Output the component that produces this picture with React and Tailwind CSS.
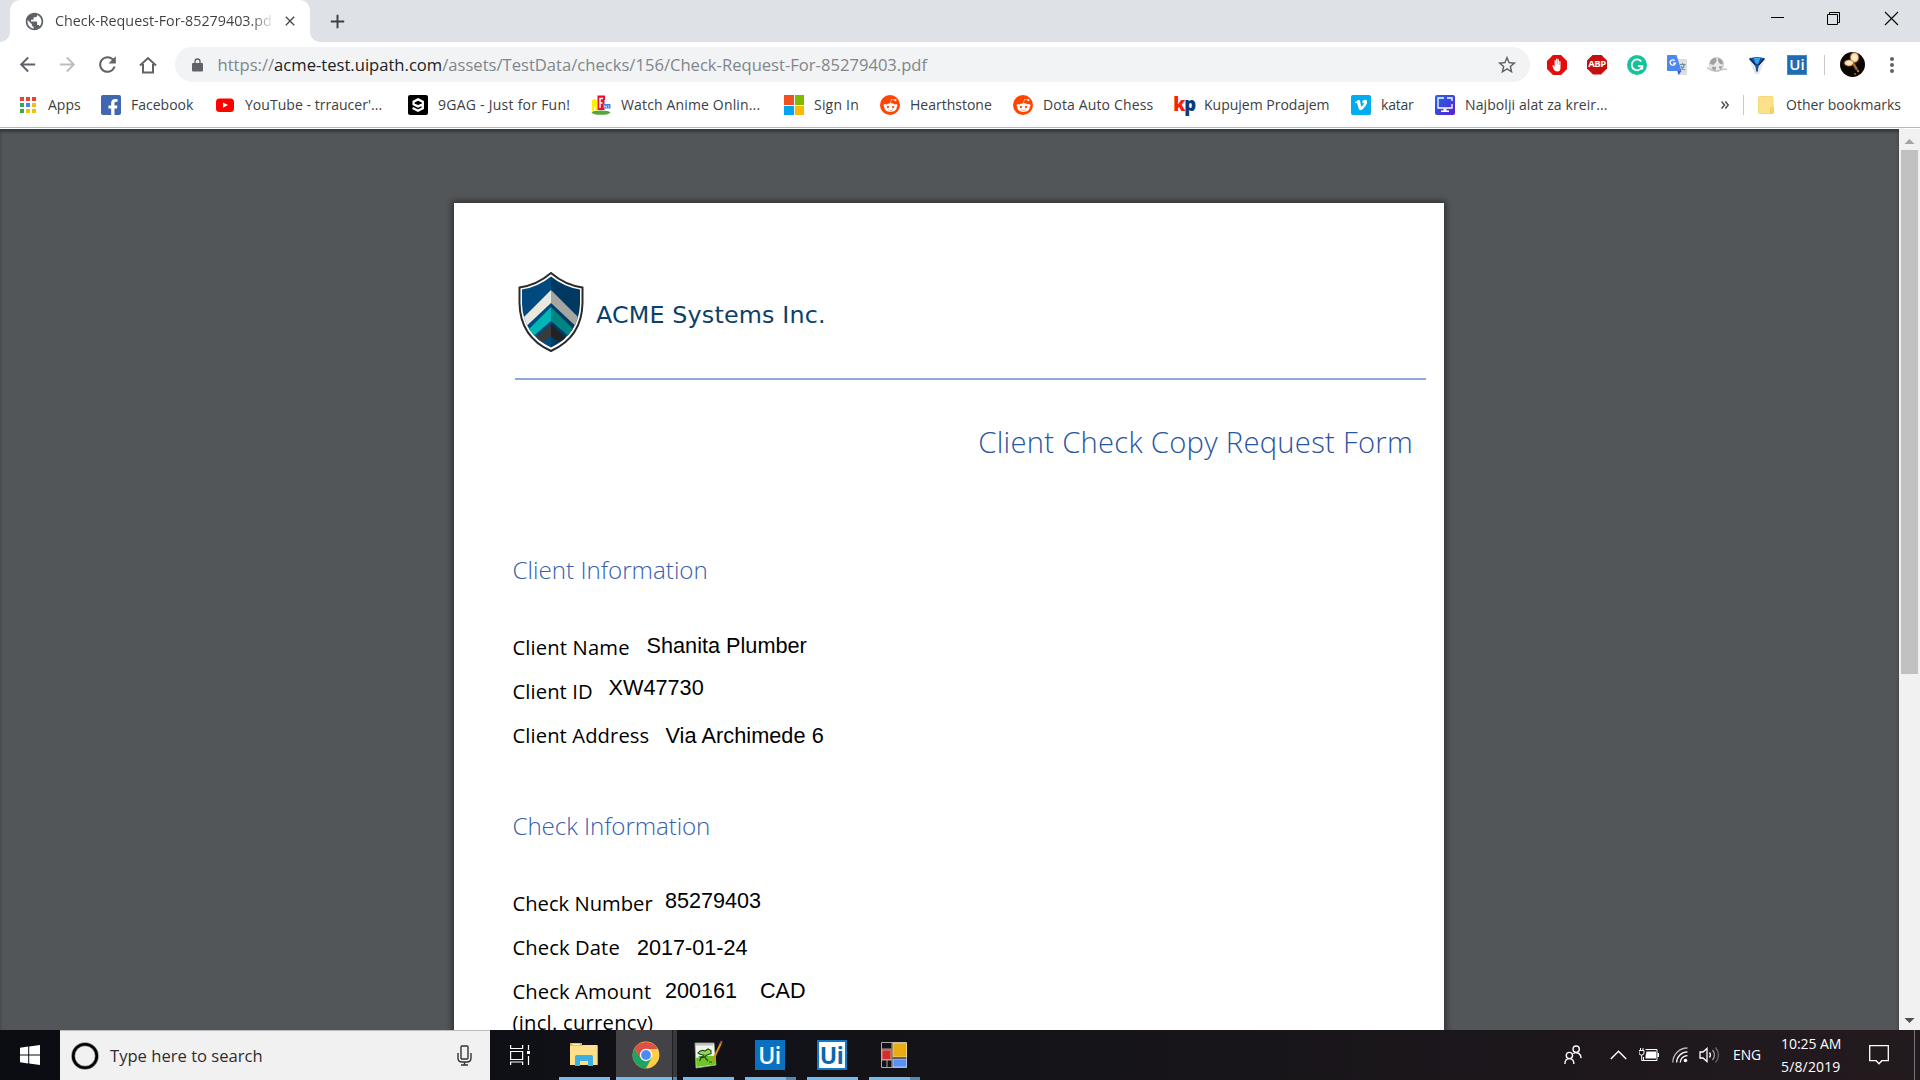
import React from "react";
import { MdArrowBack, MdArrowForward, MdRefresh, MdStarBorder, MdPublic, MdClose, MdAdd } from "react-icons/md";
import { FaFacebookF, FaRedditAlien, FaVimeoV } from "react-icons/fa";

/* ---------- bookmark icons ---------- */

function AppsIcon() {
  const colors = ["#ea4335", "#ea4335", "#ea4335", "#34a853", "#4285f4", "#fbbc05", "#34a853", "#fbbc05", "#fbbc05"];
  return (
    <svg className="h-4 w-4" viewBox="0 0 16 16">
      {colors.map((c, i) => (
        <rect key={i} x={(i % 3) * 6} y={Math.floor(i / 3) * 6} width="4" height="4" fill={c} />
      ))}
    </svg>
  );
}

function FacebookIcon() {
  return (
    <div className="flex h-5 w-5 items-end justify-end overflow-hidden rounded-[2px] bg-[#4267b2] pr-[2px]">
      <FaFacebookF className="-mb-px h-[17px] w-[12px] text-white" />
    </div>
  );
}

function YouTubeIcon() {
  return (
    <svg className="h-5 w-[18px]" viewBox="0 0 18 20">
      <rect x="0" y="3.5" width="18" height="13.5" rx="3.5" fill="#f00" />
      <path d="M7 7.4v5.4l5-2.7z" fill="#fff" />
    </svg>
  );
}

function NineGagIcon() {
  return (
    <svg className="h-5 w-5" viewBox="0 0 20 20">
      <rect width="20" height="20" rx="2" fill="#000" />
      <path d="M14.800 9.200 10 11.400 5.600 9.300V6.600L10 4.400l4.800 2.300v6.500L10 15.700l-5.400-2.700" fill="none" stroke="#fff" strokeWidth="2.300" />
    </svg>
  );
}

function AnimeIcon() {
  return (
    <svg className="h-5 w-5" viewBox="0 0 20 20">
      <ellipse cx="10" cy="17.600" rx="9.400" ry="2.200" fill="#57a639" />
      <path d="M1 16V6.500Q1 4 3.500 4T6 6.500V16H4.400v-4H3v4z" fill="#fff000" />
      <path d="M6.500.500H14V5h-.500v10h-7z" fill="#e8112d" />
      <path d="M9 13V3.500h3M9 8h2.500" stroke="#fff" strokeWidth="1.500" fill="none" />
      <path d="M12 9h7.500v4.500H12z" fill="#3f86dc" />
      <path d="M13.500 12.500v-2l2 2v-2m2 0v2" stroke="#d8ebff" fill="none" strokeWidth=".8" />
    </svg>
  );
}

function MicrosoftIcon() {
  return (
    <div className="grid h-5 w-5 grid-cols-2 gap-px">
      <div className="bg-[#f25022]" />
      <div className="bg-[#7fba00]" />
      <div className="bg-[#00a4ef]" />
      <div className="bg-[#ffb900]" />
    </div>
  );
}

function RedditIcon() {
  return (
    <div className="flex h-5 w-5 items-center justify-center rounded-full bg-[#ff4500]">
      <FaRedditAlien className="h-[15px] w-[15px] text-white" />
    </div>
  );
}

function KpIcon() {
  return (
    <div className="-mt-[3px] flex h-5 w-5 items-center justify-center font-['Open_Sans'] text-[18.5px] leading-5 font-extrabold tracking-[-1.4px]">
      <span className="text-[#f5220d]">k</span>
      <span className="text-[#0b3a75]">p</span>
    </div>
  );
}

function VimeoIcon() {
  return (
    <div className="flex h-5 w-5 items-center justify-center rounded-[2px] bg-[#00adef]">
      <FaVimeoV className="h-[14px] w-[14px] text-white" />
    </div>
  );
}

function MonitorIcon() {
  return (
    <svg className="h-5 w-5" viewBox="0 0 20 20">
      <defs>
        <linearGradient id="mon" x1="0" y1="0" x2="1" y2="1">
          <stop offset="0" stopColor="#1d6be6" />
          <stop offset="1" stopColor="#5a1fd8" />
        </linearGradient>
      </defs>
      <rect width="20" height="20" rx="2" fill="url(#mon)" />
      <path d="M9 3H3v10h14V9M12 3h5v3" fill="none" stroke="#fff" strokeWidth="1.300" />
      <path d="M8.500 13.500h3v2H14V17H6v-1.500h2.500z" fill="#fff" />
    </svg>
  );
}

const bookmarks = [
  { label: "Apps", icon: AppsIcon, item: "w-[81px]", text: "pl-3" },
  { label: "Facebook", icon: FacebookIcon, item: "w-[115px]", text: "pl-[10px]" },
  { label: "YouTube - trraucer'...", icon: YouTubeIcon, item: "w-[192px]", text: "pl-[11px] tracking-[0.03px]" },
  { label: "9GAG - Just for Fun!", icon: NineGagIcon, item: "w-[183px]", text: "pl-[10px] tracking-[0.25px]" },
  { label: "Watch Anime Onlin...", icon: AnimeIcon, item: "w-[193px]", text: "pl-[10px] tracking-[0.15px]" },
  { label: "Sign In", icon: MicrosoftIcon, item: "w-[96px]", text: "pl-[10px] tracking-[0.2px]" },
  { label: "Hearthstone", icon: RedditIcon, item: "w-[133px]", text: "pl-[10px]" },
  { label: "Dota Auto Chess", icon: RedditIcon, item: "w-[161px]", text: "pl-[10px] tracking-[0.15px]" },
  { label: "Kupujem Prodajem", icon: KpIcon, item: "w-[177px]", text: "pl-[10px]" },
  { label: "katar", icon: VimeoIcon, item: "w-[84px]", text: "pl-[10px] tracking-[-0.2px]" },
  { label: "Najbolji alat za kreir...", icon: MonitorIcon, item: "w-[286px]", text: "pl-[10px] tracking-[0.1px]" },
];

/* ---------- browser chrome ---------- */

function TabStrip() {
  return (
    <div className="flex h-[42px] bg-[#dee1e6]">
      <div className="w-[10px] bg-white">
        <div className="h-full rounded-br-[10px] bg-[#dee1e6]" />
      </div>
      <div className="w-[300px] bg-[#dee1e6]">
        <div className="flex h-full items-center rounded-t-[10px] bg-white pl-[14px]">
          <MdPublic className="h-[21px] w-[21px] text-[#5f6368]" />
          <div className="ml-[10px] w-[218px] overflow-hidden bg-linear-to-r from-[#3c4043] from-90% to-[#3c404310] bg-clip-text text-[14.300px] leading-5 whitespace-nowrap text-transparent">
            Check-Request-For-85279403.pd
          </div>
          <MdClose className="ml-[9px] h-4 w-4 text-[#45494d]" />
        </div>
      </div>
      <div className="w-[10px] bg-white">
        <div className="h-full rounded-bl-[10px] bg-[#dee1e6]" />
      </div>
      <div className="flex flex-1 items-center pl-[6px]">
        <MdAdd className="h-[23px] w-[23px] text-[#3c4043]" />
      </div>
      <svg className="h-[42px] w-[149px]" viewBox="0 0 149 42" fill="none" stroke="#000" strokeWidth="1">
        <path d="M0 17.500h13" />
        <path d="M56.500 14.500h10v10h-10zM58.500 14.500v-2h10v10h-2" />
        <path d="M114 12l13 13M127 12l-13 13" strokeWidth="1.100" />
      </svg>
    </div>
  );
}

function Extensions() {
  return (
    <div className="flex items-center gap-5 pl-[17px]">
      <svg className="h-5 w-5" viewBox="0 0 20 20">
        <path d="M6 0h8l6 6v8l-6 6H6l-6-6V6z" fill="#e40d0d" />
        <path d="M5.300 10.500 6.300 10l1.300 2V5.500q.6-.8 1.200 0V9.500h.3V3.800q.65-.8 1.300 0v5.700h.3V4.500q.6-.8 1.200 0v5.500h.4V6.300q.6-.7 1.200 0V13q0 3.600-3.200 3.600-2.600 0-3.500-2.100z" fill="#fff" />
      </svg>
      <div className="flex h-5 w-5 items-center justify-center bg-[#c70d0d] text-[9.500px] font-bold tracking-[-0.4px] text-white [clip-path:polygon(30%_0,70%_0,100%_30%,100%_70%,70%_100%,30%_100%,0_70%,0_30%)]">
        ABP
      </div>
      <svg className="h-5 w-5" viewBox="0 0 20 20">
        <circle cx="10" cy="10" r="10" fill="#15c39a" />
        <path d="M14.300 6.500A5.400 5.400 0 1 0 15.300 11.200H11M15.300 10.500v4" fill="none" stroke="#fff" strokeWidth="1.800" />
      </svg>
      <svg className="h-5 w-5" viewBox="0 0 20 20">
        <path d="M8 4h11q1 0 1 1v14q0 1-1 1h-8z" fill="#dcdee0" />
        <path d="M13 9.500h5.500M15.500 8v1.500M17.500 9.500q-1 4-4 5.500M14 11q1 3 4 4" stroke="#6d8a98" strokeWidth="1.100" fill="none" />
        <path d="M1 0h8.500l5 16H1q-1 0-1-1V1q0-1 1-1z" fill="#4d87f0" />
        <path d="M10.500 16h4L11.500 20z" fill="#3a5cc0" />
        <path d="M7.800 5.600A2.700 2.700 0 1 0 8.500 8.100H6" fill="none" stroke="#fff" strokeWidth="1.300" />
      </svg>
      <svg className="h-5 w-5" viewBox="0 0 20 20">
        <circle cx="9.500" cy="9.500" r="7" fill="#e9e9e9" stroke="#cdcdcd" />
        <path d="M3.500 5.500 7 2.800l3 1.200-1 3-2.500 3L3 9zM11.500 2.800l4 2.700.5 4-3-.5-2-3zM5 11.500l4 .5-.5 4-3-1.500zM11.500 11.500l4-.5-2 4z" fill="#a0a0a0" />
        <path d="M0 12.500q6 5 12 3t8-1" fill="none" stroke="#bdbdbd" strokeWidth="1.200" />
      </svg>
      <svg className="h-5 w-5" viewBox="0 0 20 20">
        <path d="M3 2h14q2 2 0 5l-5 12H8L3 7Q1 4 3 2z" fill="#e3e5e8" />
        <path d="M2.500 3.500q7.500-3 15 0L14 8q-3 2-3 8.500H9Q9 10 6 8z" fill="#14509e" />
        <path d="M6.500 2.800h7L11.500 8q-1.500 2-3 0z" fill="#38a4ee" />
        <path d="M2.500 3.500 8.500 10M17.500 3.500l-6 6.500" stroke="#0a2550" strokeWidth="1.200" />
      </svg>
      <div className="flex h-5 w-5 items-center justify-center border border-[#4b88bd] bg-[#1f6cb0] text-[15px] font-semibold text-white">
        Ui
      </div>
    </div>
  );
}

function Toolbar() {
  return (
    <div className="flex h-[45px] items-center bg-white pl-4">
      <MdArrowBack className="h-[23px] w-[23px] text-[#5f6368]" />
      <MdArrowForward className="ml-[17px] h-[23px] w-[23px] text-[#bbbdbf]" />
      <MdRefresh className="ml-4 h-[25px] w-[25px] text-[#5f6368]" />
      <svg className="ml-[19px] h-[18px] w-[18px]" viewBox="0 0 18 18" fill="none" stroke="#5f6368" strokeWidth="2">
        <path d="M1 9.500 9 2l8 7.500M4 8v8.500h10V8" />
      </svg>
      <div className="ml-[18px] flex h-[35px] w-[1355px] items-center rounded-full bg-[#f1f3f4] pr-3 pl-[17px]">
        <svg className="h-[14px] w-[11px]" viewBox="0 0 11 14">
          <path d="M3 5.500V3.500a2.500 2.500 0 0 1 5 0v2" fill="none" stroke="#5f6368" strokeWidth="1.300" />
          <rect y="5" width="11" height="8.500" rx="1" fill="#5f6368" />
        </svg>
        <div className="ml-[14.500px] flex-1 text-[16.600px] leading-6 whitespace-nowrap text-[#80868b]">
          https://<span className="text-[#202124]">acme-test.uipath.com</span>/assets/TestData/checks/156/Check-Request-For-85279403.pdf
        </div>
        <MdStarBorder className="h-[22px] w-[22px] text-[#5f6368]" />
      </div>
      <Extensions />
      <div className="ml-[17px] h-5 w-px bg-[#c6c8ca]" />
      <svg className="ml-[15px] h-[25px] w-[25px]" viewBox="0 0 25 25">
        <defs>
          <clipPath id="av"><circle cx="12.500" cy="12.500" r="12.500" /></clipPath>
          <radialGradient id="flame"><stop offset="0" stopColor="#fff6e0" /><stop offset=".6" stopColor="#ffd9a0" /><stop offset="1" stopColor="#8a4a18" stopOpacity="0" /></radialGradient>
        </defs>
        <g clipPath="url(#av)">
          <rect width="25" height="25" fill="#0c0604" />
          <ellipse cx="14.500" cy="5.500" rx="5.500" ry="6.500" fill="url(#flame)" />
          <ellipse cx="9" cy="11" rx="6" ry="4" fill="url(#flame)" />
          <path d="M12 12l2.500-1L18 17l-2 1.500z" fill="#a86a30" />
          <circle cx="18" cy="19" r="1.200" fill="#a3863c" />
          <circle cx="15" cy="22" r=".9" fill="#8c7a30" />
        </g>
      </svg>
      <svg className="ml-[25px] h-[18px] w-1" viewBox="0 0 4 18" fill="#5f6368">
        <circle cx="2" cy="3" r="2" />
        <circle cx="2" cy="9" r="2" />
        <circle cx="2" cy="15" r="2" />
      </svg>
    </div>
  );
}

function BookmarksBar() {
  return (
    <div className="flex h-[42px] items-center border-b border-white bg-white">
      <div className="flex h-full w-full items-center border-b border-[#b6b7b8] pb-[4px] pl-5 text-[14px] leading-5 whitespace-nowrap text-[#3c4043]">
        {bookmarks.map(({ label, icon: Icon, item, text }) => (
          <div key={label} className={"flex shrink-0 items-center " + item}>
            <Icon />
            <span className={text}>{label}</span>
          </div>
        ))}
        <svg className="h-2 w-2" viewBox="0 0 8 8" fill="none" stroke="#4a4d51" strokeWidth="1.500">
          <path d="M.5.500 3.500 4l-3 3.500M4.300.500l3 3.500-3 3.500" />
        </svg>
        <div className="ml-[14px] h-5 w-px bg-[#c6c8ca]" />
        <svg className="ml-[14px] h-[18px] w-4" viewBox="0 0 16 18">
          <rect x=".5" y=".5" width="14.500" height="17" rx="1" fill="#fce18a" stroke="#f7d774" />
          <rect x="12.500" y="11.500" width="3" height="6" rx="1" fill="#fbd75b" stroke="#eec444" strokeWidth=".8" />
        </svg>
        <span className="pl-3">Other bookmarks</span>
      </div>
    </div>
  );
}

/* ---------- PDF document ---------- */

function AcmeShield() {
  return (
    <svg className="h-20 w-[66px]" viewBox="0 0 66 80">
      <defs>
        <clipPath id="inner">
          <path d="M33 4.500Q20 15 4 17.500V32Q5 62 33 75.500 61 62 62 32V17.500Q46 15 33 4.500z" />
        </clipPath>
      </defs>
      <path d="M33 1Q19 13 1.500 15.500V31Q2 65 33 79 64 65 64.500 31V15.500Q47 13 33 1z" fill="#fff" stroke="#2b2a2a" strokeWidth="2" />
      <g clipPath="url(#inner)">
        <rect width="33" height="80" fill="#004a80" />
        <rect x="33" width="33" height="80" fill="#003a63" />
        <path d="M33 18 0 51v11l33-31z" fill="#e8e8df" />
        <path d="M33 18l33 33v11L33 31z" fill="#a5a6a2" />
        <path d="M33 35 6 62v10l27-23z" fill="#00b5b5" />
        <path d="M33 35l27 27v10L33 49z" fill="#008585" />
        <path d="M33 52 14 70v8l19-14z" fill="#3a3a3a" />
        <path d="M33 52l19 18v8L33 64z" fill="#222" />
      </g>
    </svg>
  );
}

function Value({ className, children }) {
  return <div className={"font-['Liberation_Sans'] " + className}>{children}</div>;
}

function Field({ label, width, children }) {
  return (
    <div className="flex h-11 whitespace-nowrap">
      <div className={width}>{label}</div>
      {children}
    </div>
  );
}

function Section({ title, titleClass, children }) {
  return (
    <section className="pl-[58.500px]">
      <h2 className={"h-[81px] text-[24.200px] leading-9 font-light text-[#3560b0] " + titleClass}>{title}</h2>
      <div className="text-[20.200px] leading-[30px] text-black">{children}</div>
    </section>
  );
}

function PdfViewer() {
  return (
    <div className="flex h-[901px] bg-[#525659]">
      <div className="h-full flex-1 overflow-hidden pt-[74px] pl-[454px] shadow-[inset_0_3px_3px_rgba(0,0,0,0.35)]">
        <div className="h-[1400px] w-[990px] bg-white shadow-[0_0_6px_2px_rgba(0,0,0,0.45)]">
          <div className="flex h-[175px] pt-[69px] pl-16">
            <AcmeShield />
            <div className="mt-7 ml-[12px] font-['DejaVu_Sans'] text-[23.800px] leading-[30px] tracking-[0.150px] whitespace-nowrap text-[#0d3f6b]">
              ACME Systems Inc.
            </div>
          </div>
          <div className="ml-[61px] h-[2px] w-[911px] bg-[#8faadc]" />
          <h1 className="mt-[42px] pr-[31px] text-right text-[29.200px] leading-10 font-light tracking-[0.280px] text-[#2a559f]">
            Client Check Copy Request Form
          </h1>
          <div className="mt-[90px] flex flex-col gap-[43px]">
            <Section title="Client Information" titleClass="">
              <Field label="Client Name" width="-mt-px w-[134px] tracking-[0.15px]">
                <Value className="-mt-[2px] text-[21.700px]">Shanita Plumber</Value>
              </Field>
              <Field label="Client ID" width="-mt-px w-[96px] tracking-[0.1px]">
                <Value className="-mt-1 text-[21.700px]">XW47730</Value>
              </Field>
              <Field label="Client Address" width="-mt-px w-[153px] tracking-[0.1px]">
                <Value className="text-[21.700px] tracking-[0.05px]">Via Archimede 6</Value>
              </Field>
            </Section>
            <Section title="Check Information" titleClass="tracking-[-0.1px]">
              <Field label="Check Number" width="-mt-px w-[152.500px]">
                <Value className="-mt-[3px] text-[21.600px]">85279403</Value>
              </Field>
              <Field label="Check Date" width="-mt-px w-[124.500px] tracking-[0.1px]">
                <Value className="text-[21.600px]">2017-01-24</Value>
              </Field>
              <Field
                label={<>Check Amount<br /><span className="tracking-[0.25px]">(incl. currency)</span></>}
                width="w-[152.500px] tracking-[0.1px] leading-[31px] -mt-px"
              >
                <Value className="w-[95px] -mt-px text-[21.600px]">200161</Value>
                <Value className="-mt-px text-[21.600px]">CAD</Value>
              </Field>
            </Section>
          </div>
        </div>
      </div>
      <div className="flex w-[21px] flex-col items-center bg-[#f1f1f1]">
        <svg className="h-[21px] w-[21px]" viewBox="0 0 21 21">
          <path d="M10.500 10l5 5h-10z" fill="#a3a3a3" />
        </svg>
        <div className="h-[524px] w-[17px] bg-[#c1c1c1]" />
        <svg className="mt-auto h-[21px] w-[21px]" viewBox="0 0 21 21">
          <path d="M5.500 9h10l-5 5z" fill="#505050" />
        </svg>
      </div>
    </div>
  );
}

/* ---------- taskbar ---------- */

function ExplorerIcon() {
  return (
    <svg className="h-[30px] w-[30px]" viewBox="0 0 30 30">
      <path d="M1 3h12v3h15.500v19H1z" fill="#e8b838" />
      <path d="M1 6h11l1.500-1h15v20H1z" fill="#ffe08a" />
      <path d="M3.500 4.500h7" stroke="#fff3c8" strokeWidth="1.500" />
      <path d="M6 26V17q0-2 2-2h14q2 0 2 2v9h-5v-5h-8v5z" fill="#3bb0e4" />
    </svg>
  );
}

function ChromeIcon() {
  return (
    <svg className="h-7 w-7" viewBox="0 0 48 48">
      <circle cx="24" cy="24" r="23" fill="#ffcd46" />
      <path d="M4.100 12.500A23 23 0 0 0 23.500 47L33.500 29.500 24 24 14.500 29.500z" fill="#1da462" />
      <path d="M4.100 12.500 14.500 30 24 24V13.500h19.900A23 23 0 0 0 4.100 12.500z" fill="#dd5144" />
      <circle cx="24" cy="24" r="10.600" fill="#fff" />
      <circle cx="24" cy="24" r="8.400" fill="#4c8bf5" />
    </svg>
  );
}

function NotepadIcon() {
  return (
    <svg className="h-[30px] w-[30px]" viewBox="0 0 30 30">
      <path d="M2 3h19l2 22-20 3z" fill="#f2f4ee" stroke="#9aa38c" strokeWidth=".8" />
      <path d="M3 18q10-3 19.300-2l.7 8.500L3.500 27z" fill="#6fc524" />
      <path d="M2.500 4.500h18" stroke="#8b9186" strokeWidth="2" strokeDasharray="1 1" />
      <path d="M5 13q3-4 7-2l3-2 3 1.500v3L14 15q-4 4-7 2 3 0 4-2-4 0-6-2z" fill="#9ad65a" stroke="#1d4f14" strokeWidth="1.100" />
      <path d="M8 18l-1.500 3M12 17.500l3 3.500M16 22h3" stroke="#1d4f14" strokeWidth="1.200" fill="none" />
      <path d="M28 3 20 20l-.5 2" stroke="#d98e1c" strokeWidth="2" fill="none" />
      <path d="M28.800 1 27.500 4" stroke="#a5564e" strokeWidth="2" />
    </svg>
  );
}

function UiPathIcon() {
  return (
    <div className="flex h-[30px] w-[30px] items-center justify-center bg-[#0a70c0] text-[23px] leading-none font-semibold tracking-[-0.5px] text-white">
      Ui
    </div>
  );
}

function UiPathRobotIcon() {
  return (
    <div className="flex h-[30px] w-[30px] items-center justify-center border-2 border-[#1478c6] bg-white text-[23px] leading-none font-bold tracking-[-0.5px] text-[#0a67ad]">
      Ui
    </div>
  );
}

function FormsIcon() {
  return (
    <svg className="h-[26px] w-[26px]" viewBox="0 0 26 26">
      <path d="M.5.500h25v25H.5zM.5 7h10M.5 18h11M6 18v7.500M11 .5v25" fill="none" stroke="#a9a9a9" />
      <rect x="12" y="1" width="13.500" height="14" fill="#e9ac12" stroke="#f7dc86" strokeWidth=".8" />
      <rect x="1" y="8" width="9" height="9.500" fill="#d0312d" stroke="#eda29e" strokeWidth=".8" />
      <rect x="12" y="17" width="13.500" height="8" fill="#5b8ff0" stroke="#b7ceff" strokeWidth=".8" />
    </svg>
  );
}

function TaskButton({ icon: Icon, stacked }) {
  return (
    <div className="flex h-full w-[62px] items-stretch">
      <div className={"ml-[6px] flex flex-col " + (stacked ? "w-[41px]" : "w-[51px]")}>
        <div className="flex flex-1 items-center justify-center pt-[3px] pr-[2px]">
          <div className={stacked ? "-mr-[10px] shrink-0" : "shrink-0"}><Icon /></div>
        </div>
        <div className="h-[3px] bg-[#76b9ed]" />
      </div>
      {stacked && (
        <div className="flex w-[10px] items-end">
          <div className="h-[3px] w-full bg-[#5689b0]" />
        </div>
      )}
    </div>
  );
}

function ActiveTaskButton({ icon: Icon }) {
  return (
    <div className="flex h-full w-[62px] items-stretch pl-px">
      <div className="flex w-[56px] flex-col bg-[#434246]">
        <div className="flex flex-1 items-center justify-center pt-[3px] pl-[3px]">
          <Icon />
        </div>
        <div className="h-[3px] bg-[#76b9ed]" />
      </div>
      <div className="flex w-[5px] items-end border-l border-[#1e1e22] bg-[#39383c]">
        <div className="h-[3px] w-full bg-[#5689b0]" />
      </div>
    </div>
  );
}

function Tray() {
  return (
    <div className="ml-auto flex h-full items-center text-white">
      <svg className="h-[20px] w-[18px]" viewBox="0 0 20 22" fill="none" stroke="#fff" strokeWidth="1.500">
        <circle cx="13.500" cy="4.500" r="3.500" />
        <circle cx="6" cy="11.500" r="3.500" />
        <path d="M1 21q0-6 5-6t5 6M10.500 9.500Q12 8 14 8.500q4.500.5 5 6" />
      </svg>
      <svg className="ml-[28px] h-[10px] w-[17px]" viewBox="0 0 17 10" fill="none" stroke="#fff" strokeWidth="1.500">
        <path d="M.8 9 8.500 1.300 16.200 9" />
      </svg>
      <svg className="ml-[12px] h-4 w-5" viewBox="0 0 20 16">
        <path d="M6.500 2.500h11.500v11H4.500V10" fill="none" stroke="#fff" />
        <path d="M7.500 4.500H17v7H6.500V9z" fill="#fff" />
        <path d="M18.500 6h1.500v4h-1.500z" fill="#fff" />
        <path d="M0 3.500h5V6q0 2-2.500 2T0 6z" fill="#15151a" stroke="#fff" />
        <path d="M1.500 1v2.500M4 1v2.500M2.700 8v5.500h2" fill="none" stroke="#fff" />
      </svg>
      <svg className="ml-[13px] h-4 w-[16px]" viewBox="0 0 16 16" fill="none" strokeWidth="1.300">
        <path d="M.8 15.500A14.500 14.500 0 0 1 15.500 1" stroke="#b8b8ba" />
        <path d="M4.600 15.500A10.800 10.800 0 0 1 15.500 4.900" stroke="#fff" />
        <path d="M8.200 15.500A7.200 7.200 0 0 1 15.500 8.600" stroke="#fff" />
        <circle cx="13.500" cy="13.500" r="1.800" fill="#fff" />
      </svg>
      <svg className="ml-[11px] h-5 w-[21px]" viewBox="0 0 21 20" fill="none" stroke="#fff" strokeWidth="1.300">
        <path d="M1 7h3l4-3.500v13L4 13H1z" />
        <path d="M10.500 7.500q2 2.500 0 5" />
        <path d="M13.500 5q4 5 0 10" stroke="#98989a" />
        <path d="M16.500 2.500q6 7.500 0 15" stroke="#68686a" />
      </svg>
      <div className="ml-[13px] w-[48px] pt-px text-[13.800px]">ENG</div>
      <div className="w-[88px] text-[14px] leading-[23px] whitespace-nowrap">
        <div className="tracking-[-0.05px]">10:25 AM</div>
        <div className="tracking-[0.15px]">5/8/2019</div>
      </div>
      <svg className="h-5 w-5" viewBox="0 0 20 20" fill="none" stroke="#fff" strokeWidth="1.300">
        <path d="M.7.700h18.600v15h-6.500L10 18.700 7.200 15.700H.7z" />
      </svg>
      <div className="ml-[25px] h-full w-px bg-[#77757a]" />
      <div className="w-[5px]" />
    </div>
  );
}

function Taskbar() {
  return (
    <div className="flex h-[50px] bg-linear-to-r from-[#0b0d13] via-[#131318] to-[#231a1e]">
      <div className="flex w-[60px] items-center justify-center">
        <svg className="h-5 w-5" viewBox="0 0 20 20" fill="#fff">
          <path d="M0 2.800 8.200 1.600v8H0zM9.200 1.500 20 0v9.600H9.200zM0 10.500h8.200v8L0 17.300zM9.200 10.500H20V20L9.200 18.600z" />
        </svg>
      </div>
      <div className="flex w-[430px] items-center border-t border-[#bdbdbd] bg-[#f1f1f1] pr-[18px] pl-[11px]">
        <svg className="h-7 w-7" viewBox="0 0 28 28">
          <circle cx="14" cy="14" r="11.800" fill="none" stroke="#8d8d8d" strokeWidth="4" />
          <circle cx="14" cy="14" r="11.800" fill="none" stroke="#000" strokeWidth="2.600" />
        </svg>
        <div className="ml-[11px] flex-1 pt-px text-[16.600px] text-[#2e2e2e]">Type here to search</div>
        <svg className="h-[21px] w-[15px]" viewBox="0 0 15 21" fill="none" stroke="#333" strokeWidth="1.400">
          <rect x="4" y="1" width="7" height="13" rx="1" />
          <path d="M1 8v5q0 4 4 4h5q4 0 4-4V8M7.500 17v3M4 20h7" />
        </svg>
      </div>
      <svg className="ml-[20px] h-5 w-5 self-center" viewBox="0 0 20 20" fill="none" stroke="#fff" strokeWidth="1.200">
        <path d="M.6 0v3.500h12V0M.6 6.500h12v8H.6zM.6 20v-3h12v3M18.500 0v5M18.500 11v9" />
        <rect x="17" y="6" width="3" height="3" fill="#fff" stroke="none" />
      </svg>
      <div className="ml-[23px] flex h-full">
        <TaskButton icon={ExplorerIcon} />
        <ActiveTaskButton icon={ChromeIcon} />
        <TaskButton icon={NotepadIcon} />
        <TaskButton icon={UiPathIcon} stacked />
        <TaskButton icon={UiPathRobotIcon} />
        <TaskButton icon={FormsIcon} stacked />
      </div>
      <Tray />
    </div>
  );
}

export default function App() {
  return (
    <div className="flex h-[1080px] w-[1920px] flex-col overflow-hidden font-['Open_Sans',sans-serif]">
      <TabStrip />
      <Toolbar />
      <BookmarksBar />
      <PdfViewer />
      <Taskbar />
    </div>
  );
}
